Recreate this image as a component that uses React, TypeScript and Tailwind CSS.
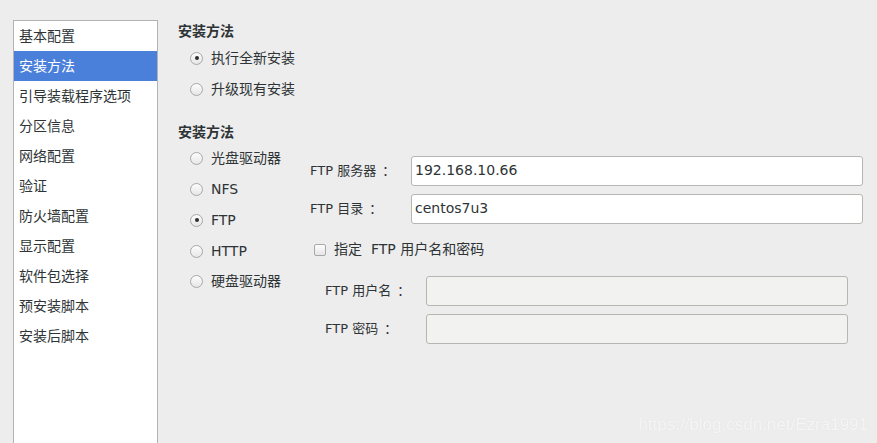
import React from 'react';

const font = { fontFamily: '"DejaVu Sans", "Noto Sans CJK SC", sans-serif' };

const navItems = [
  '基本配置',
  '安装方法',
  '引导装载程序选项',
  '分区信息',
  '网络配置',
  '验证',
  '防火墙配置',
  '显示配置',
  '软件包选择',
  '预安装脚本',
  '安装后脚本',
];

function Radio({ checked, label }: { checked?: boolean; label: string }) {
  return (
    <div className="flex h-[30.75px] items-center gap-[8px]">
      <span className="flex h-[13px] w-[13px] items-center justify-center rounded-full border border-[#a8a8a8] bg-gradient-to-b from-[#fdfdfd] to-[#e6e6e6]">
        {checked && <span className="h-[4px] w-[4px] rounded-full bg-[#2e2e2e]" />}
      </span>
      <span className="text-[14px] text-[#2e3436]">{label}</span>
    </div>
  );
}

function Field({ label, value, disabled }: { label: string; value?: string; disabled?: boolean }) {
  return (
    <div className="flex h-[38px] items-center">
      <span className="flex w-[101px] text-[13px] text-[#2e3436]">
        {label}
        <span className="ml-[6px]">：</span>
      </span>
      <div
        className={`flex h-[30px] flex-1 items-center rounded-[3px] border border-[#b6b6b3] px-[3px] text-[14px] text-[#2e3436] ${
          disabled ? 'bg-[#f2f2f0]' : 'bg-white'
        }`}
      >
        {value}
      </div>
    </div>
  );
}

export default function App() {
  return (
    <div className="relative flex h-[443px] w-[877px] overflow-hidden bg-[#ededed]" style={font}>
      <aside className="ml-[13px] mt-[20px] w-[145px] shrink-0 border border-b-0 border-[#b3b3b3] bg-white">
        {navItems.map((item) => (
          <div
            key={item}
            className={`flex h-[30px] items-center px-[5px] text-[14px] ${
              item === '安装方法' ? 'bg-[#4b80da] text-white' : 'text-[#2e3436]'
            }`}
          >
            {item}
          </div>
        ))}
      </aside>

      <main className="flex-1 pl-[20px] pr-[14px] pt-[20px]">
        <h2 className="text-[14px] font-bold leading-[22px] text-[#2e3436]">安装方法</h2>
        <div className="ml-[12px] mt-[1px]">
          <Radio checked label="执行全新安装" />
          <Radio label="升级现有安装" />
        </div>

        <h2 className="mt-[17px] text-[14px] font-bold leading-[20px] text-[#2e3436]">安装方法</h2>
        <div className="flex">
          <div className="ml-[12px] mt-[2px] w-[120px] shrink-0">
            <Radio label="光盘驱动器" />
            <Radio label="NFS" />
            <Radio checked label="FTP" />
            <Radio label="HTTP" />
            <Radio label="硬盘驱动器" />
          </div>
          <div className="flex-1 pt-[10px]">
            <Field label="FTP 服务器" value="192.168.10.66" />
            <Field label="FTP 目录" value="centos7u3" />
            <div className="flex h-[44px] items-center gap-[8px] pl-[4px]">
              <span className="h-[12px] w-[12px] rounded-[2px] border border-[#a8a8a8] bg-gradient-to-b from-[#fdfdfd] to-[#e6e6e6]" />
              <span className="text-[14px] text-[#2e3436]">指定&nbsp; FTP 用户名和密码</span>
            </div>
            <div className="pl-[15px] pr-[15px]">
              <Field label="FTP 用户名" disabled />
              <Field label="FTP 密码" disabled />
            </div>
          </div>
        </div>
      </main>

      <div
        className="absolute bottom-[6px] right-[9px] text-[17px] text-[#f6f6f6]"
        style={{ fontFamily: '"Liberation Sans", sans-serif', textShadow: '0 0 1px #dcdcdc' }}
      >
        https://blog.csdn.net/Ezra1991
      </div>
    </div>
  );
}
